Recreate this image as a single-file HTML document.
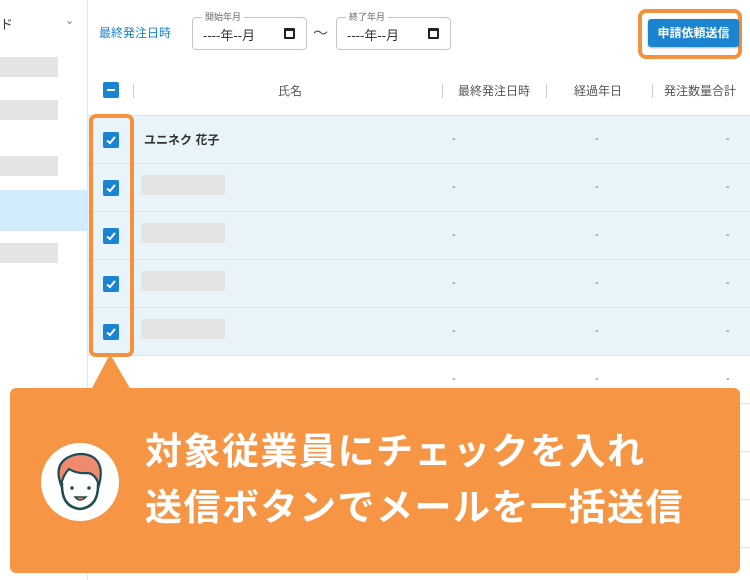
<!DOCTYPE html>
<html><head><meta charset="utf-8"><style>
*{margin:0;padding:0;box-sizing:border-box}
body{width:750px;height:580px;position:relative;overflow:hidden;background:#fff;font-family:"Liberation Sans","Noto Sans CJK JP",sans-serif;color:#333}
.a{position:absolute}
.g{background:#e4e4e4}
.row{position:absolute;left:88px;width:662px;height:48px;border-bottom:1px solid #dde3e8}
.blue{background:#e9f4fa}
.cb{position:absolute;left:15px;top:16px;width:16px;height:16px;background:#1a84d0;border-radius:2px}
.cb svg{position:absolute;left:2px;top:2px}
.d{position:absolute;top:17px;font-size:11px;color:#666}
.sep{position:absolute;top:84px;width:1px;height:14px;background:#ccc}
.h{position:absolute;top:82px;font-size:12px;color:#555}
.inp{position:absolute;top:17px;height:33px;border:1px solid #c4c4c4;border-radius:4px}
.inp .l{position:absolute;left:9px;top:-8px;background:#fff;padding:0 3px;font-size:9px;color:#666}
.inp .v{position:absolute;left:10px;top:7px;font-size:13px;color:#333}
.cal{position:absolute;right:11px;top:10px;width:11px;height:11px;border:2px solid #222;border-top-width:3px;border-radius:1px}
</style></head><body>
<div class="a" style="left:87px;top:0;width:1px;height:580px;background:#e4e4e4"></div>
<div class="a" style="left:0;top:14px;font-size:13px;color:#333">ド</div>
<div class="a" style="left:65px;top:14px;font-size:11px;color:#777">⌄</div>
<div class="a g" style="left:0;top:57px;width:58px;height:20px"></div>
<div class="a g" style="left:0;top:100px;width:58px;height:20px"></div>
<div class="a g" style="left:0;top:156px;width:58px;height:20px"></div>
<div class="a" style="left:0;top:190px;width:87px;height:41px;background:#d3ecfb"></div>
<div class="a g" style="left:0;top:243px;width:58px;height:20px"></div>
<div class="a" style="left:99px;top:24px;font-size:12px;color:#1a84d0">最終発注日時</div>
<div class="inp" style="left:192px;width:115px"><span class="l">開始年月</span><span class="v">----年--月</span><span class="cal"></span></div>
<div class="a" style="left:313px;top:22px;font-size:15px;color:#555">〜</div>
<div class="inp" style="left:336px;width:115px"><span class="l">終了年月</span><span class="v">----年--月</span><span class="cal"></span></div>
<div class="a" style="left:638px;top:9px;width:104px;height:50px;border:4px solid #f4913c;border-radius:8px"></div>
<div class="a" style="left:648px;top:19px;width:91px;height:28px;background:#1a84d0;border-radius:3px;color:#fff;font-size:12px;font-weight:bold;text-align:center;line-height:28px;box-shadow:0 1px 2px rgba(0,0,0,.3)">申請依頼送信</div>
<div class="a" style="left:103px;top:82px;width:16px;height:16px;background:#1a84d0;border-radius:2px"><div style="position:absolute;left:4px;top:7px;width:8px;height:2px;background:#fff"></div></div>
<div class="sep" style="left:133px"></div>
<div class="h" style="left:278px">氏名</div>
<div class="sep" style="left:442px"></div>
<div class="h" style="left:458px">最終発注日時</div>
<div class="sep" style="left:546px"></div>
<div class="h" style="left:574px">経過年日</div>
<div class="sep" style="left:652px"></div>
<div class="h" style="left:664px">発注数量合計</div>
<div class="a" style="left:88px;top:115px;width:662px;height:1px;background:#dde3e8"></div>
<div class="row blue" style="top:116px"><div class="cb"><svg width="12" height="12"><path d="M2 6.5 L5 9 L10 3" stroke="#fff" stroke-width="2" fill="none"/></svg></div><div class="a" style="left:56px;top:15px;font-size:12px;font-weight:bold">ユニネク 花子</div><span class="d" style="left:364px">-</span><span class="d" style="left:507px">-</span><span class="d" style="left:638px">-</span></div>
<div class="row blue" style="top:164px"><div class="cb"><svg width="12" height="12"><path d="M2 6.5 L5 9 L10 3" stroke="#fff" stroke-width="2" fill="none"/></svg></div><div class="a g" style="left:53px;top:11px;width:84px;height:20px"></div><span class="d" style="left:364px">-</span><span class="d" style="left:507px">-</span><span class="d" style="left:638px">-</span></div>
<div class="row blue" style="top:212px"><div class="cb"><svg width="12" height="12"><path d="M2 6.5 L5 9 L10 3" stroke="#fff" stroke-width="2" fill="none"/></svg></div><div class="a g" style="left:53px;top:11px;width:84px;height:20px"></div><span class="d" style="left:364px">-</span><span class="d" style="left:507px">-</span><span class="d" style="left:638px">-</span></div>
<div class="row blue" style="top:260px"><div class="cb"><svg width="12" height="12"><path d="M2 6.5 L5 9 L10 3" stroke="#fff" stroke-width="2" fill="none"/></svg></div><div class="a g" style="left:53px;top:11px;width:84px;height:20px"></div><span class="d" style="left:364px">-</span><span class="d" style="left:507px">-</span><span class="d" style="left:638px">-</span></div>
<div class="row blue" style="top:308px"><div class="cb"><svg width="12" height="12"><path d="M2 6.5 L5 9 L10 3" stroke="#fff" stroke-width="2" fill="none"/></svg></div><div class="a g" style="left:53px;top:11px;width:84px;height:20px"></div><span class="d" style="left:364px">-</span><span class="d" style="left:507px">-</span><span class="d" style="left:638px">-</span></div>
<div class="row" style="top:356px"><span class="d" style="left:364px">-</span><span class="d" style="left:507px">-</span><span class="d" style="left:638px">-</span></div>
<div class="row" style="top:404px"></div>
<div class="row" style="top:452px"></div>
<div class="row" style="top:500px"></div>
<div class="a" style="left:89px;top:114px;width:45px;height:243px;border:4px solid #f4913c;border-radius:7px"></div>
<svg class="a" style="left:88px;top:352px" width="46" height="40"><path d="M22 2 L3 38 L43 38 Z" fill="#f69645"/></svg>
<div class="a" style="left:10px;top:388px;width:730px;height:185px;background:#f69645;border-radius:6px"></div>
<div class="a" style="left:41px;top:443px;width:78px;height:78px;border-radius:50%;background:#fff"></div>
<svg class="a" style="left:41px;top:443px" width="78" height="78" viewBox="0 0 78 78">
<path d="M20 42 Q12 20 30 13 Q40 9 50 13 Q64 20 58 42 Q54 30 46 30 Q36 31 28 26 Q22 32 20 42Z" fill="#f08a6e" stroke="#1d4d55" stroke-width="2.2"/>
<path d="M21 40 Q20 64 39 66 Q58 64 57 40" fill="#fff" stroke="#1d4d55" stroke-width="2.5"/>
<circle cx="31" cy="45" r="1.8" fill="#1d4d55"/><circle cx="48" cy="45" r="1.8" fill="#1d4d55"/>
<path d="M34 54 Q39 60 45 54 Z" fill="#f08a6e" stroke="#1d4d55" stroke-width="1.5"/>
</svg>
<div class="a" style="left:145px;top:424px;color:#fff;font-size:37px;font-weight:bold;line-height:56px;letter-spacing:1.5px;white-space:nowrap">対象従業員にチェックを入れ<br>送信ボタンでメールを一括送信</div>
</body></html>
